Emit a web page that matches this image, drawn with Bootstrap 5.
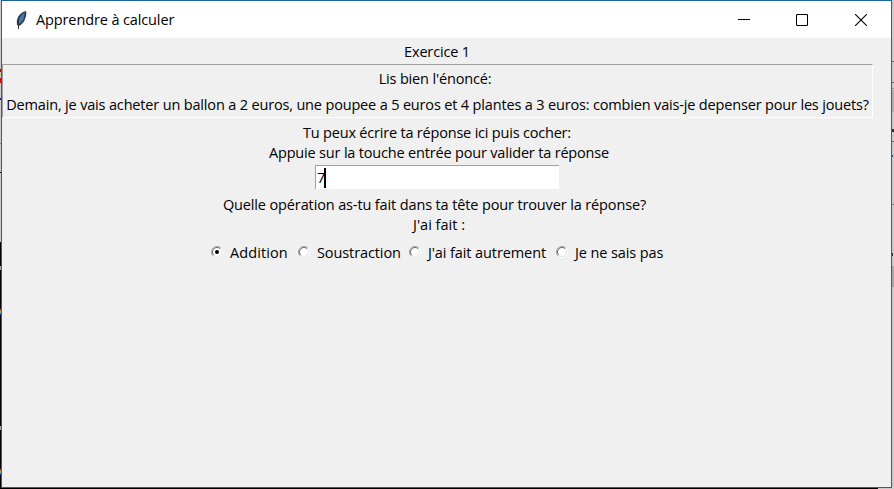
<!DOCTYPE html>
<html lang="fr">
<head>
<meta charset="utf-8">
<meta name="viewport" content="width=device-width, initial-scale=1">
<title>Apprendre à calculer</title>
<link href="https://cdn.jsdelivr.net/npm/bootstrap@5.3.0/dist/css/bootstrap.min.css" rel="stylesheet">
<style>
body{height:489px;font:14.5px/20px "Open Sans","Noto Sans",sans-serif;color:#000;letter-spacing:-.165px;padding:0 2px 1px 1px;
 background:
 linear-gradient(#000,#000) 0 488px/878px 1px no-repeat,
 linear-gradient(#c00,#c00) 0 69px/1px 3px no-repeat,
 linear-gradient(#d8d04a,#d8d04a) 0 73px/1px 3px no-repeat,
 linear-gradient(#c00,#c00) 0 78px/1px 5px no-repeat,
 linear-gradient(#0c2f78,#0c2f78) 0 98px/1px 2px no-repeat,
 linear-gradient(#888,#888) 0 143px/1px 1px no-repeat,
 linear-gradient(#000,#000) 0 172px/1px 1px no-repeat,
 linear-gradient(#aaa,#aaa) 0 266px/1px 4px no-repeat,
 linear-gradient(#b85c20 0 2px,#8bc0ac 2px 4px,#1757a5 4px) 0 309px/1px 6px no-repeat,
 linear-gradient(#aaa,#aaa) 0 426px/1px 4px no-repeat,
 linear-gradient(#b85c20 0 2px,#8bc0ac 2px 4px,#1757a5 4px) 0 469px/1px 6px no-repeat,
 linear-gradient(#c9cdd2 242px,#000 242px) 0 0/1px 489px no-repeat,
 linear-gradient(#666,#666) 100% 61px/2px 1px no-repeat,
 linear-gradient(#666,#666) 100% 82px/2px 1px no-repeat,
 linear-gradient(#999,#999) 100% 88px/2px 1px no-repeat,
 linear-gradient(#b0b0b0,#b0b0b0) 100% 90px/2px 22px no-repeat,
 linear-gradient(#333,#333) 100% 129px/2px 3px no-repeat,
 linear-gradient(#666,#666) 100% 141px/2px 1px no-repeat,
 linear-gradient(#1757a5,#1757a5) 892px 155px/1px 2px no-repeat,
 linear-gradient(#888,#888) 100% 204px/2px 1px no-repeat,
 linear-gradient(#333,#333) 892px 253px/1px 3px no-repeat,
 linear-gradient(#a8a8a8,#a8a8a8) 100% 266px/2px 21px no-repeat,
 #cbcbcb}
.window{height:488px;border:1px solid #1a67a3;background:#f0f0f0}
.titlebar{height:37px;background:#fff;padding-left:11px}
.feather{margin:0 7px 0 1px}
.t0{letter-spacing:-.12px}
.controls{gap:46px;padding-right:24px}
.controls svg:nth-child(2){margin-right:1px}
.content{width:871px;white-space:nowrap}
.sentence{height:54px;width:871px;border:1px solid #fff;border-top-color:#a0a0a0;border-left-color:#a0a0a0;margin-top:2px}
.ln{height:20px;display:flex;justify-content:center}
.t1{margin-right:1px}
.t2{margin-right:5px}
.t3{letter-spacing:-.165px}
.t4{margin-right:1px;letter-spacing:-.2px}
.t5{margin-left:3px;letter-spacing:-.18px}
.t6{margin-right:6px;letter-spacing:-.13px}
.t7{margin-left:3px;letter-spacing:0}
.prompt{margin-top:5px}
.problem{margin-top:6px}
.question{margin-top:6px}
.answer{width:244px;height:24px;border:0;border-top:1px solid #a0a0a0;border-left:1px solid #a0a0a0;background:#fff;margin:2px 1px 0 0;padding-left:1px}
.answer span:first-child{letter-spacing:-1px}
.caret{width:2px;height:20px;background:#000}
.opts{align-self:flex-start;margin-left:209px}
.opt{height:20px}
.opt svg{margin:0 7px 2px 0}
.o1{width:87px;letter-spacing:.1px}
.o2{width:111px;letter-spacing:-.1px}
.o3{width:147px;letter-spacing:-.1px}
.o4{letter-spacing:-.1px}
</style>
<script src="https://cdn.jsdelivr.net/npm/bootstrap@5.3.0/dist/js/bootstrap.bundle.min.js"></script>
</head>
<body class="m-0 overflow-hidden">
<svg class="d-none"><defs>
<g id="ring" fill="none"><circle cx="6" cy="6" r="5" fill="#fff"/><path d="M2.1 9.9A5.5 5.5 0 0 1 9.9 2.1" stroke="#a0a0a0"/><path d="M2.8 9.2A4.5 4.5 0 0 1 9.2 2.8" stroke="#696969"/><path d="M9.9 2.1A5.5 5.5 0 0 1 2.1 9.9" stroke="#fff"/><path d="M9.2 2.8A4.5 4.5 0 0 1 2.8 9.2" stroke="#e3e3e3"/></g>
</defs></svg>
<main class="window">
 <header class="titlebar d-flex align-items-center">
  <svg class="feather" width="15" height="20" viewBox="0 0 15 20"><path d="M12 1Q7 2 4 7Q2 11 3 15L5 16Q10 13 11 9Q13 4 12 1Z" fill="#31373e"/><path d="M11 2Q7 4 5 9L5 14Q10 11 10 7Z" fill="#4475ad"/><path d="M4.5 13V19" fill="none" stroke="#333" stroke-width="1"/></svg>
  <span class="t0">Apprendre à calculer</span>
  <div class="controls d-flex ms-auto">
   <svg width="12" height="12"><path d="M0 5.5H12" stroke="#000"/></svg>
   <svg width="12" height="12"><path d="M.5 .5h11v11H.5z" fill="none" stroke="#000"/></svg>
   <svg width="12" height="12"><path d="M0 0L12 12M12 0L0 12" stroke="#000" stroke-width="1.1"/></svg>
  </div>
 </header>
 <section class="content d-flex flex-column align-items-center">
  <div class="ln pt-1 h-auto"><span class="t1">Exercice 1</span></div>
  <div class="sentence">
   <div class="ln mt-1"><span class="t2">Lis bien l'énoncé:</span></div>
   <div class="ln problem"><span class="t3">Demain, je vais acheter un ballon a 2 euros, une poupee a 5 euros et 4 plantes a 3 euros: combien vais-je depenser pour les jouets?</span></div>
  </div>
  <div class="ln prompt"><span class="t4">Tu peux écrire ta réponse ici puis cocher:</span></div>
  <div class="ln"><span class="t5">Appuie sur la touche entrée pour valider ta réponse</span></div>
  <div class="answer d-flex align-items-center"><span>7</span><span class="caret"></span></div>
  <div class="ln question"><span class="t6">Quelle opération as-tu fait dans ta tête pour trouver la réponse?</span></div>
  <div class="ln"><span class="t7">J'ai fait :</span></div>
  <div class="opts d-flex mt-2">
   <div class="opt o1 d-flex align-items-center"><svg width="12" height="12"><use href="#ring"/><circle cx="6" cy="6" r="2" fill="#000"/></svg><span>Addition</span></div>
   <div class="opt o2 d-flex align-items-center"><svg width="12" height="12"><use href="#ring"/></svg><span>Soustraction</span></div>
   <div class="opt o3 d-flex align-items-center"><svg width="12" height="12"><use href="#ring"/></svg><span>J'ai fait autrement</span></div>
   <div class="opt o4 d-flex align-items-center"><svg width="12" height="12"><use href="#ring"/></svg><span>Je ne sais pas</span></div>
  </div>
 </section>
</main>
</body>
</html>
